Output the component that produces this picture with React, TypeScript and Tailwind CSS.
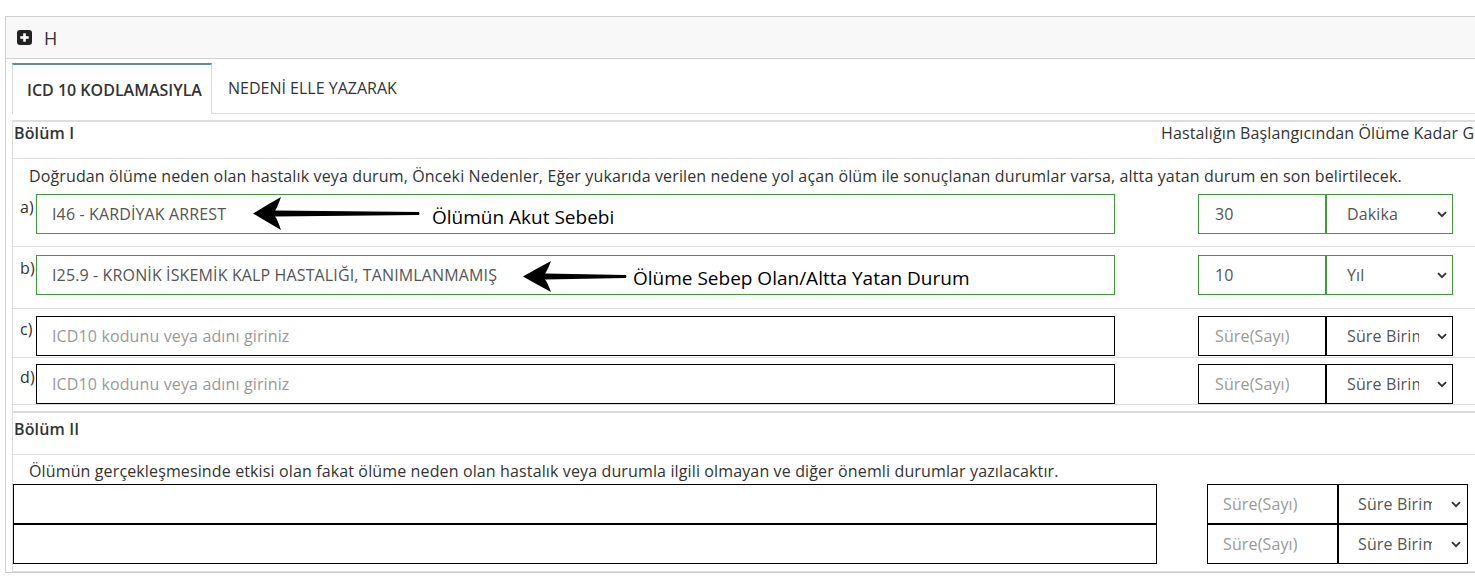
import type { ReactNode } from "react";

const GREEN = "border-[#3e9b38]";
const BLACK = "border-black";

function PlusSquare() {
  return (
    <svg width="15" height="15" viewBox="0 0 15 15" aria-hidden="true">
      <rect x="0" y="0" width="15" height="15" rx="3" fill="#222" />
      <rect x="3.3" y="6.2" width="8.4" height="2.6" fill="#fff" />
      <rect x="6.2" y="3.3" width="2.6" height="8.4" fill="#fff" />
    </svg>
  );
}

function Chevron() {
  return (
    <svg width="10" height="7" viewBox="0 0 10 7" aria-hidden="true">
      <path d="M1 1.2 L5 5.2 L9 1.2" fill="none" stroke="#333" strokeWidth="1.9" />
    </svg>
  );
}

// hand-drawn style annotation arrow, tip on the left
function Arrow(props: { w: number; h: number; head: number }) {
  const { w, h, head } = props;
  const m = h / 2;
  const d = `M0 ${m} Q${head * 0.5} ${m - h * 0.26} ${head} 0 Q${head - 4} ${m - 5} ${head - 6} ${m - 3} L${w - 1} ${m - 1.5} Q${w} ${m} ${w - 1} ${m + 1.5} L${head - 6} ${m + 3} Q${head - 4} ${m + 5} ${head} ${h} Q${head * 0.5} ${m + h * 0.26} 0 ${m} Z`;
  return (
    <svg width={w} height={h} viewBox={`0 0 ${w} ${h}`} aria-hidden="true">
      <path d={d} fill="#000" />
    </svg>
  );
}

function SelectBox(props: { value: string; green?: boolean; w: string; textW: string; pl: string; mr: string }) {
  return (
    <div
      className={`flex h-[40px] items-center border ${props.green ? GREEN : BLACK} ${props.w} ${props.pl} text-[#555]`}
    >
      <span className={`overflow-hidden whitespace-nowrap ${props.textW}`}>{props.value}</span>
      <span className={`ml-auto flex ${props.mr}`}>
        <Chevron />
      </span>
    </div>
  );
}

function FieldRow(props: {
  label: string;
  value?: string;
  duration?: string;
  unit?: string;
  green?: boolean;
  note?: ReactNode;
}) {
  const b = props.green ? GREEN : BLACK;
  return (
    <div className="flex items-start pl-[7px]">
      <span className="w-[16px] pt-[2px] text-[#333]">{props.label}</span>
      <div className={`relative flex h-[40px] w-[1079px] items-center border ${b} pl-[15px]`}>
        {props.value ? (
          <span className="text-[#555]">{props.value}</span>
        ) : (
          <span className="text-[#999]">ICD10 kodunu veya adını giriniz</span>
        )}
        {props.note}
      </div>
      <div className="ml-[83px] flex">
        <div className={`flex h-[40px] w-[128px] items-center border ${b} pl-[16px]`}>
          {props.duration ? (
            <span className="text-[#555]">{props.duration}</span>
          ) : (
            <span className="text-[#999]">Süre(Sayı)</span>
          )}
        </div>
        <SelectBox
          value={props.unit ?? "Süre Birimi"}
          green={props.green}
          w="w-[127px]"
          textW="w-[72px]"
          pl="pl-[20px]"
          mr="mr-[5px]"
        />
      </div>
    </div>
  );
}

function ExtraRow() {
  return (
    <div className="flex">
      <div className="h-[40px] w-[1144px] border border-black" />
      <div className="ml-[50px] flex">
        <div className="flex h-[40px] w-[131px] items-center border border-black pl-[15px] text-[#999]">Süre(Sayı)</div>
        <SelectBox value="Süre Birimi" w="w-[130px]" textW="w-[74px]" pl="pl-[19px]" mr="mr-[6px]" />
      </div>
    </div>
  );
}

export default function App() {
  return (
    <div className="h-[580px] w-full overflow-hidden bg-white font-['Open_Sans',sans-serif] text-[16px] leading-[22px] tracking-[0.13px] text-[#333]">
      <div className="pl-[5px] pt-4">
        <div className="w-[1600px] border border-[#cfcfcf]">
          <div className="flex h-[42px] items-center gap-[12px] border-b border-[#cfcfcf] bg-[#f8f8f8] pl-[11px]">
            <PlusSquare />
            <span className="text-[18px] leading-none text-[#333]">H</span>
          </div>

          <div className="pl-[6px] pt-[4px]">
            {/* tabs */}
            <div className="flex h-[51px] border-b border-[#ddd]">
              <div className="flex h-[51px] w-[200px] items-center border-x border-t-2 border-[#ddd] border-t-[#5f8d9c] bg-white pl-[14px] font-semibold tracking-normal">
                ICD 10 KODLAMASIYLA
              </div>
              <div className="flex items-center pl-[16px] tracking-normal">NEDENİ ELLE YAZARAK</div>
            </div>

            <div className="mt-[6px] border-l border-[#ddd]">
              {/* Bölüm I */}
              <div className="border-t-2 border-[#ddd]">
                <div className="flex h-[37px] items-start border-b border-[#ddd]">
                  <span className="w-[1148px] pl-[1px] font-semibold">Bölüm I</span>
                  <span className="whitespace-nowrap">Hastalığın Başlangıcından Ölüme Kadar Geçen Süre</span>
                </div>

                <div className="border-b border-[#ddd] pb-[12px] pt-[6px]">
                  <p className="pl-[16px]">
                    Doğrudan ölüme neden olan hastalık veya durum, Önceki Nedenler, Eğer yukarıda verilen nedene yol açan ölüm ile sonuçlanan durumlar varsa, altta yatan durum en son belirtilecek.
                  </p>
                  <div className="mt-[7px]">
                    <FieldRow
                      label="a)"
                      value="I46 - KARDİYAK ARREST"
                      duration="30"
                      unit="Dakika"
                      green
                      note={
                        <>
                          <span className="absolute left-[216px] top-[2px] flex">
                            <Arrow w={167} h={33} head={28} />
                          </span>
                          <span className="absolute left-[395px] top-[8px] whitespace-nowrap text-[19px] leading-[28px] tracking-normal text-black">
                            Ölümün Akut Sebebi
                          </span>
                        </>
                      }
                    />
                  </div>
                </div>

                <div className="border-b border-[#ddd] pb-[13px] pt-[8px]">
                  <FieldRow
                    label="b)"
                    value="I25.9 - KRONİK İSKEMİK KALP HASTALIĞI, TANIMLANMAMIŞ"
                    duration="10"
                    unit="Yıl"
                    green
                    note={
                      <>
                        <span className="absolute left-[486px] top-[5px] flex">
                          <Arrow w={104} h={31} head={28} />
                        </span>
                        <span className="absolute left-[596px] top-[8px] whitespace-nowrap text-[19px] leading-[28px] tracking-normal text-black">
                          Ölüme Sebep Olan/Altta Yatan Durum
                        </span>
                      </>
                    }
                  />
                </div>

                <div className="border-b border-[#ddd] pb-[1px] pt-[7px]">
                  <FieldRow label="c)" />
                </div>

                <div className="border-b border-[#ddd] pt-[6px]">
                  <FieldRow label="d)" />
                </div>
              </div>

              {/* Bölüm II */}
              <div className="mt-[6px] border-t-2 border-[#ddd]">
                <div className="flex h-[42px] items-start border-b border-[#ddd] pt-[5px]">
                  <span className="pl-[1px] font-semibold">Bölüm II</span>
                </div>
                <div className="border-b border-[#ddd] pb-[7px] pt-[5px]">
                  <p className="pl-[16px]">
                    Ölümün gerçekleşmesinde etkisi olan fakat ölüme neden olan hastalık veya durumla ilgili olmayan ve diğer önemli durumlar yazılacaktır.
                  </p>
                  <div className="mt-[2px]">
                    <ExtraRow />
                    <ExtraRow />
                  </div>
                </div>
              </div>
            </div>
          </div>
        </div>
      </div>
    </div>
  );
}
